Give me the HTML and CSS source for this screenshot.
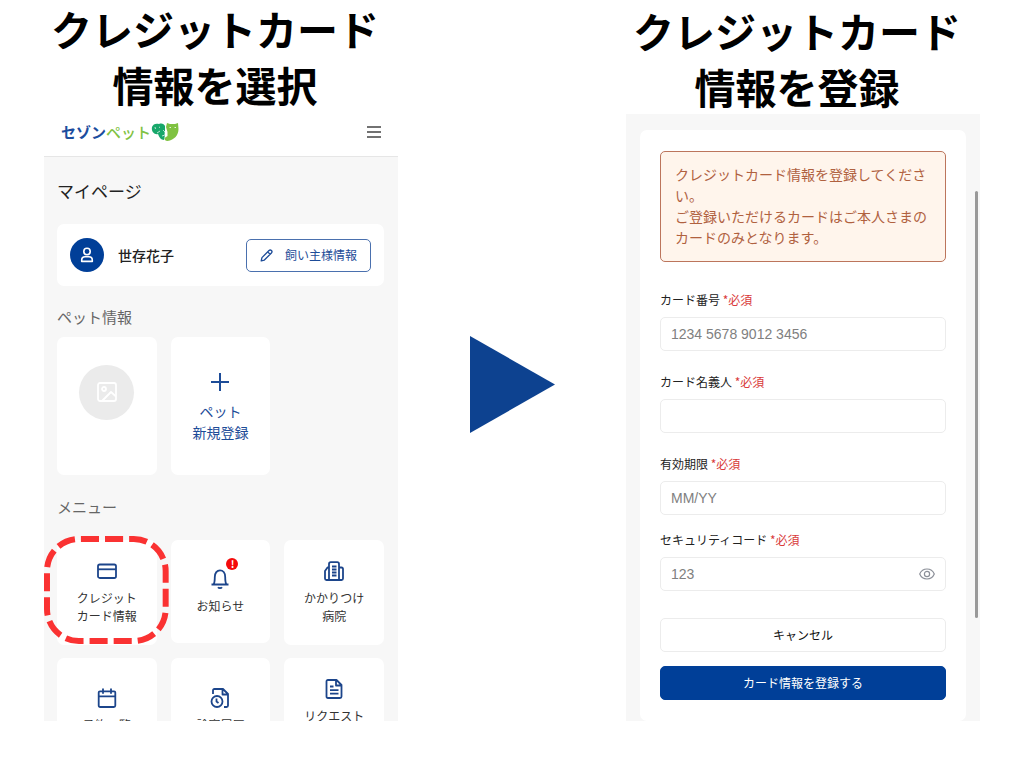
FILE: index.html
```html
<!DOCTYPE html>
<html lang="ja">
<head>
<meta charset="utf-8">
<meta name="viewport" content="width=device-width, initial-scale=1">
<title>クレジットカード情報の登録手順</title>
<link rel="stylesheet" href="styles.css">
</head>
<body>
<main class="steps">
  <section class="step">
    <h1 class="step-title">クレジットカード<br>情報を選択</h1>
    <div class="screen">
      <header class="topbar">
        <a class="logo" href="#"><span class="logo-saison">セゾン</span><span class="logo-pet">ペット</span><svg class="logo-mark" viewBox="0 0 28 20" aria-hidden="true">
          <path fill="#17a76a" d="M1 5C2 2 5 1 8 2c3-1 5 0 6 2v9l-1 5c-3 0-5-3-6-6-3 1-7-2-6-7z"/>
          <path fill="#7fc241" d="M15 5l1-4 3 1h5l3-1 .5 6c0 6-4 11-11 12-2 0-3-1-3-3l3-2v-4z"/>
          <path fill="none" stroke="#fff" stroke-width=".7" d="M4 5l.5 2M8 5l1 .5M6 11l3-2M12 8l2 2v3l-3 1"/>
          <path fill="none" stroke="#fff" stroke-width=".8" d="M18.500 5.500h1.500m3.500 0H25"/>
        </svg></a>
        <button class="menu-button" type="button" aria-label="メニューを開く">
          <svg viewBox="0 0 14 12" width="14" height="12"><path d="M0 1h14M0 6h14M0 11h14" fill="none" stroke="#444" stroke-width="1.600"/></svg>
        </button>
      </header>
      <div class="mypage">
        <h2 class="page-title">マイページ</h2>
        <div class="owner">
          <span class="avatar"><svg class="icon" viewBox="0 0 16 16"><circle cx="8" cy="4.5" r="3.2"/><path d="M2.7 14.4v-1.2c0-2 1.5-3.4 3.4-3.4h3.8c1.9 0 3.400 1.400 3.400 3.400v1.200z"/></svg></span>
          <span class="owner-name">世存花子</span>
          <button class="owner-button" type="button"><svg class="icon" viewBox="0 0 14 14"><path d="M1.300 12.700l.8-3.400L9.700 1.700a1.800 1.800 0 0 1 2.600 2.600L4.700 11.900zM8.300 3.100l2.600 2.600"/></svg>飼い主様情報</button>
        </div>
        <h3 class="section-title">ペット情報</h3>
        <div class="grid pets">
          <div class="tile pet">
            <span class="pet-photo"><svg class="icon" viewBox="0 0 20 20"><rect x="1" y="1" width="18" height="18" rx="2"/><circle cx="7" cy="7" r="2"/><path d="M5.500 18.500L14 10l5 4.500"/></svg></span>
          </div>
          <button class="tile add-pet" type="button">
            <svg class="icon" viewBox="0 0 18 18"><path d="M9 0v18M0 9h18"/></svg>
            <span>ペット<br>新規登録</span>
          </button>
        </div>
        <h3 class="section-title section-title--menu">メニュー</h3>
        <nav class="grid menu">
          <a class="tile" href="#">
            <svg class="icon" viewBox="0 0 20 20"><rect x="1" y="3.500" width="18" height="13.500" rx="1.800"/><path d="M1 8.300h18"/></svg>
            <span>クレジット<br>カード情報</span>
            <svg class="ring" viewBox="0 0 125 108" preserveAspectRatio="none"><rect x="3" y="3" width="119" height="102" rx="32" pathLength="384"/></svg>
          </a>
          <a class="tile tile--notice" href="#">
            <span class="icon-wrap"><svg class="icon" viewBox="0 0 20 20"><path d="M1.500 15.500h17M3.500 15.500c1-1.500 1.300-3 1.300-7.500C4.800 4 7 1.300 10 1.300S15.200 4 15.200 8c0 4.500.3 6 1.300 7.500"/><path d="M8 18.200c.8 1.100 3.200 1.100 4 0"/></svg><b class="badge">!</b></span>
            <span>お知らせ</span>
          </a>
          <a class="tile" href="#">
            <svg class="icon" viewBox="0 0 20 20"><path d="M5 19V3c0-1.200.6-1.800 1.800-1.800h6.400c1.200 0 1.800.6 1.800 1.800v16M5 6.500H3.500L1 10v7.500c0 1 .5 1.500 1.500 1.500h15c1 0 1.500-.5 1.500-1.500V8c0-1-.5-1.500-1.500-1.500H15M8 5.500h4.500M8 8.500h4.500M8 11.500h4.500M8 14.500h4.500"/></svg>
            <span>かかりつけ<br>病院</span>
          </a>
          <a class="tile" href="#">
            <svg class="icon" viewBox="0 0 20 20"><path d="M1.700 4.500c0-.8.4-1.200 1.200-1.200h14.200c.8 0 1.200.4 1.200 1.200v13c0 1-.5 1.500-1.500 1.500H3.200c-1 0-1.500-.5-1.500-1.500zM1.700 8.300h16.600M6 .5v5.200M14 .5v5.200"/></svg>
            <span>予約一覧</span>
          </a>
          <a class="tile" href="#">
            <svg class="icon" viewBox="0 0 20 20"><path d="M3 6V2.500C3 1.500 3.500 1 4.500 1H13l5 5v11.500c0 1-.5 1.500-1.500 1.500H14M12.500 1v5.500H18"/><circle cx="7" cy="13.500" r="5.500"/><path d="M6.500 10.500v3l2 1.500"/></svg>
            <span>診察履歴</span>
          </a>
          <a class="tile" href="#">
            <svg class="icon" viewBox="0 0 20 20"><path d="M2.500 2.500c0-1 .5-1.500 1.500-1.500h8.500l5 5v11.500c0 1-.5 1.500-1.500 1.500H4c-1 0-1.500-.5-1.500-1.500zM12 1v5.500h5.500M6 7.500h3.500M6 11.200h8.500M6 14.700h8.500"/></svg>
            <span>リクエスト<br>&nbsp;</span>
          </a>
        </nav>
      </div>
    </div>
  </section>

  <svg class="arrow" viewBox="0 0 85 97" aria-hidden="true"><path d="M0 0l85 48.500L0 97z" fill="#0d4290"/></svg>

  <section class="step step--form">
    <h1 class="step-title">クレジットカード<br>情報を登録</h1>
    <div class="screen screen--form">
      <form class="card-form">
        <p class="notice">クレジットカード情報を登録してください。<br>ご登録いただけるカードはご本人さまのカードのみとなります。</p>
        <div class="field">
          <label for="number">カード番号 <span class="required">*必須</span></label>
          <input id="number" type="text" placeholder="1234 5678 9012 3456">
        </div>
        <div class="field">
          <label for="holder">カード名義人 <span class="required">*必須</span></label>
          <input id="holder" type="text">
        </div>
        <div class="field">
          <label for="expiry">有効期限 <span class="required">*必須</span></label>
          <input id="expiry" type="text" placeholder="MM/YY">
        </div>
        <div class="field field--code">
          <label for="code">セキュリティコード <span class="required">*必須</span></label>
          <div class="code-box">
            <input id="code" type="text" placeholder="123">
            <button class="eye" type="button" aria-label="コードを表示"><svg class="icon" viewBox="0 0 16 12"><path d="M.7 6C2 3 4.700 1 8 1s6 2 7.300 5C14 9 11.300 11 8 11S2 9 .7 6z"/><circle cx="8" cy="6" r="2.600"/></svg></button>
          </div>
        </div>
        <div class="actions">
          <button class="button" type="button">キャンセル</button>
          <button class="button button--primary" type="submit">カード情報を登録する</button>
        </div>
      </form>
      <span class="scrollbar"></span>
    </div>
  </section>
</main>
</body>
</html>
```
FILE: styles.css
```css
* { box-sizing: border-box; }

body {
  margin: 0;
  background: #fff;
  color: #222;
  font-family: "Noto Sans CJK JP", sans-serif;
  font-size: 12px;
  line-height: 18px;
}

h1, h2, h3, p { margin: 0; font-weight: 400; }
a { color: inherit; text-decoration: none; }
button, input { margin: 0; font: inherit; color: inherit; }
button { padding: 0; border: 0; background: none; }

.icon { display: block; flex: none; fill: none; stroke: currentColor; stroke-linejoin: round; }

.steps {
  display: grid;
  grid-template-columns: minmax(0, 354fr) minmax(0, 228fr) minmax(0, 354fr);
  height: 100vh;
  padding: 0 44px 47px;
}

.step { display: flex; flex-direction: column; min-height: 0; }

.step-title {
  padding: 0 12px 2px 0;
  color: #000;
  font-size: 41px;
  font-weight: 700;
  line-height: 56px;
  text-align: center;
  white-space: nowrap;
}

.step--form .step-title { padding: 2px 12px 0 0; }

.arrow { width: 85px; justify-self: center; align-self: center; margin-top: 47px; }

.screen { flex: 1; min-height: 0; overflow: hidden; background: #f7f7f7; }

.topbar {
  display: flex;
  align-items: center;
  justify-content: space-between;
  height: 43px;
  padding: 0 17px 6px;
  border-bottom: 1px solid #e6e6e6;
  background: #fff;
}

.logo { display: flex; align-items: center; font-size: 15px; font-weight: 700; }
.logo-saison { color: #1c4d9e; }
.logo-pet { color: #80c242; font-weight: 500; }
.logo-mark { width: 28px; height: 20px; }
.menu-button svg { display: block; }

.mypage { padding: 22px 14px 0 13px; }
.page-title { font-size: 17px; line-height: 24px; }

.owner {
  display: flex;
  align-items: center;
  margin-top: 21px;
  padding: 14px 13px;
  border-radius: 7px;
  background: #fff;
}

.avatar {
  display: grid;
  place-items: center;
  width: 34px;
  height: 34px;
  border-radius: 50%;
  background: #003f98;
  color: #fff;
}

.avatar .icon { width: 16px; stroke-width: 1.6; }
.owner-name { margin-left: 14px; font-size: 14px; font-weight: 500; }

.owner-button {
  display: flex;
  align-items: center;
  gap: 12px;
  height: 33px;
  margin-left: auto;
  padding: 0 13px;
  border: 1px solid #4a70ae;
  border-radius: 5px;
  color: #1d4c98;
}

.owner-button .icon { width: 13px; stroke-width: 1.4; }

.section-title { margin: 20px 0 9px; color: #666; font-size: 15px; line-height: 22px; }
.section-title--menu { margin: 21px 0 22px; }

.grid { display: grid; grid-template-columns: repeat(3, minmax(0, 1fr)); gap: 13px 14px; }

.tile {
  position: relative;
  display: flex;
  flex-direction: column;
  align-items: center;
  justify-content: center;
  gap: 8px;
  border-radius: 7px;
  background: #fff;
  text-align: center;
}

.pets .tile { height: 138px; }
.pet { padding-bottom: 28px; }

.pet-photo {
  display: grid;
  place-items: center;
  width: 55px;
  height: 55px;
  border-radius: 50%;
  background: #ebebeb;
  color: #fff;
}

.pet-photo .icon { width: 20px; stroke-width: 1.8; }
.add-pet { gap: 10px; padding-top: 3px; color: #1d4c98; font-size: 14px; line-height: 21px; }
.add-pet .icon { width: 18px; stroke-width: 2; }

.menu .tile { height: 105px; color: #333; }
.menu .tile--notice { height: 103px; }
.menu .icon { width: 20px; height: 20px; color: #1c458b; stroke-width: 1.8; }
.icon-wrap { position: relative; }

.badge {
  position: absolute;
  top: -11px;
  right: -8px;
  width: 12px;
  height: 12px;
  border-radius: 50%;
  background: #f40b0b;
  color: #fff;
  font-size: 10px;
  line-height: 12px;
}

.ring {
  position: absolute;
  top: -4px;
  left: -13px;
  width: calc(100% + 25px);
  height: calc(100% + 3px);
  fill: none;
  stroke: #fa3232;
  stroke-width: 6;
  stroke-dasharray: 18 6;
  stroke-dashoffset: -2;
}

.screen--form { position: relative; display: flex; padding: 16px 14px 0; }

.card-form { flex: 1; min-width: 0; padding: 21px 20px 20px; border-radius: 7px; background: #fff; }

.notice {
  padding: 12px 14px 13px;
  border: 1px solid #bc755c;
  border-radius: 5px;
  background: #fff5ec;
  color: #b0613f;
  font-size: 14px;
  line-height: 21px;
}

.field { display: flex; flex-direction: column; gap: 8px; margin-top: 22px; }
.notice + .field { margin-top: 29px; }
.field--code { margin-top: 16px; }
.required { color: #d93a3a; }

.field input {
  width: 100%;
  height: 34px;
  padding: 0 10px;
  border: 1px solid #ececec;
  border-radius: 5px;
  background: #fff;
  font-family: "Liberation Sans", "Noto Sans CJK JP", sans-serif;
  font-size: 14px;
}

.field input::placeholder { color: #808080; opacity: 1; }

.code-box { position: relative; }
.eye { position: absolute; top: 11px; right: 11px; color: #8b8f98; }
.eye .icon { width: 16px; stroke-width: 1.2; }

.actions { display: flex; flex-direction: column; gap: 14px; margin-top: 27px; }

.button { height: 34px; border: 1px solid #ececec; border-radius: 5px; color: #111; }
.button--primary { border-color: #003f98; background: #003f98; color: #fff; }

.scrollbar {
  position: absolute;
  top: 77px;
  right: 2px;
  width: 3px;
  height: 427px;
  border-radius: 2px;
  background: #999;
}
```
